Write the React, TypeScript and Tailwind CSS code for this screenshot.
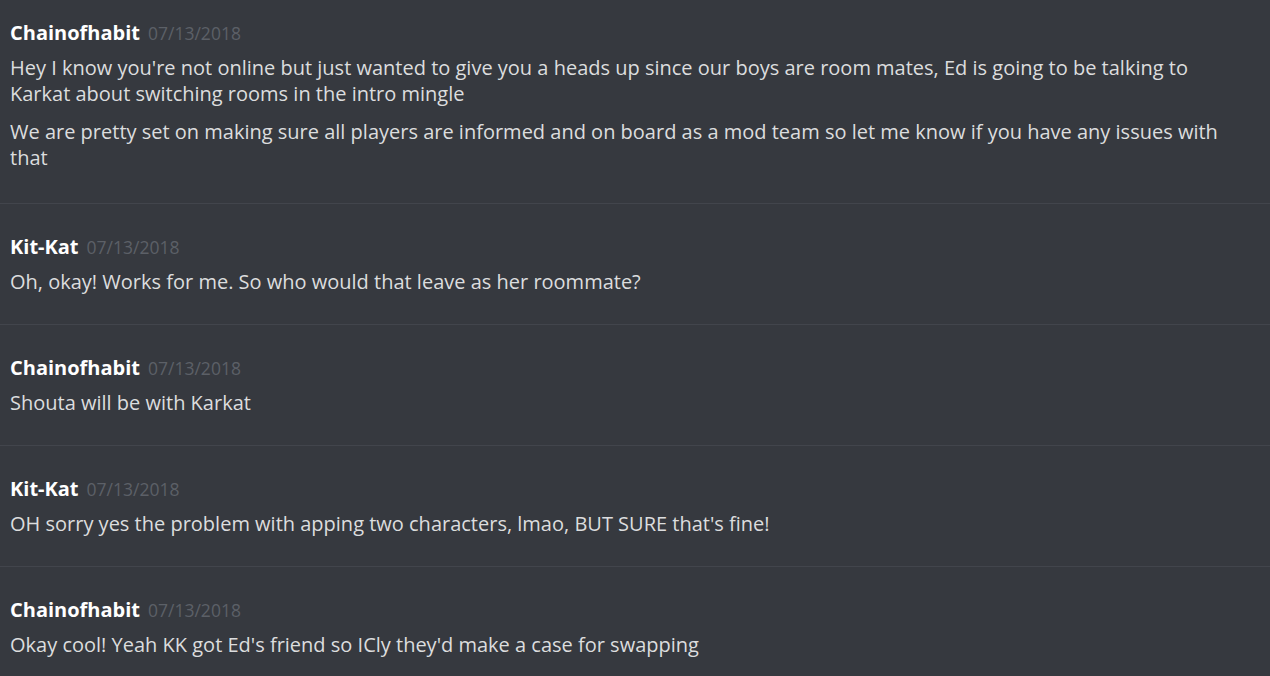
import React from "react";

type Msg = { name: string; date: string; lines: string[] };

const msgs: Msg[] = [
  {
    name: "Chainofhabit",
    date: "07/13/2018",
    lines: [
      "Hey I know you're not online but just wanted to give you a heads up since our boys are room mates, Ed is going to be talking to Karkat about switching rooms in the intro mingle",
      "We are pretty set on making sure all players are informed and on board as a mod team so let me know if you have any issues with that",
    ],
  },
  {
    name: "Kit-Kat",
    date: "07/13/2018",
    lines: ["Oh, okay! Works for me. So who would that leave as her roommate?"],
  },
  {
    name: "Chainofhabit",
    date: "07/13/2018",
    lines: ["Shouta will be with Karkat"],
  },
  {
    name: "Kit-Kat",
    date: "07/13/2018",
    lines: ["OH sorry yes the problem with apping two characters, lmao, BUT SURE that's fine!"],
  },
  {
    name: "Chainofhabit",
    date: "07/13/2018",
    lines: ["Okay cool! Yeah KK got Ed's friend so ICly they'd make a case for swapping"],
  },
];

export default function App() {
  return (
    <div
      className="w-[1270px] h-[676px] overflow-hidden bg-[#36393f]"
      style={{ fontFamily: '"Open Sans", "Noto Sans", sans-serif' }}
    >
      {msgs.map((m, i) => (
        <div
          key={i}
          className={
            i === 0
              ? "pl-[10px] pr-[40px] pt-[22px] pb-[32px]"
              : "border-t border-[#42454c] pl-[10px] pr-[40px] pt-[32px] pb-[29px]"
          }
        >
          <div className="flex items-baseline h-[22px] leading-[22px]">
            <span className="text-white font-bold text-[20px]">{m.name}</span>
            <span className="ml-[8px] text-[#5c6067] text-[17.5px]">{m.date}</span>
          </div>
          <div className="mt-[11px] flex flex-col gap-[12px]">
            {m.lines.map((l, j) => (
              <div key={j} className="text-[#dcddde] text-[20px] leading-[26px]">
                {l}
              </div>
            ))}
          </div>
        </div>
      ))}
    </div>
  );
}
